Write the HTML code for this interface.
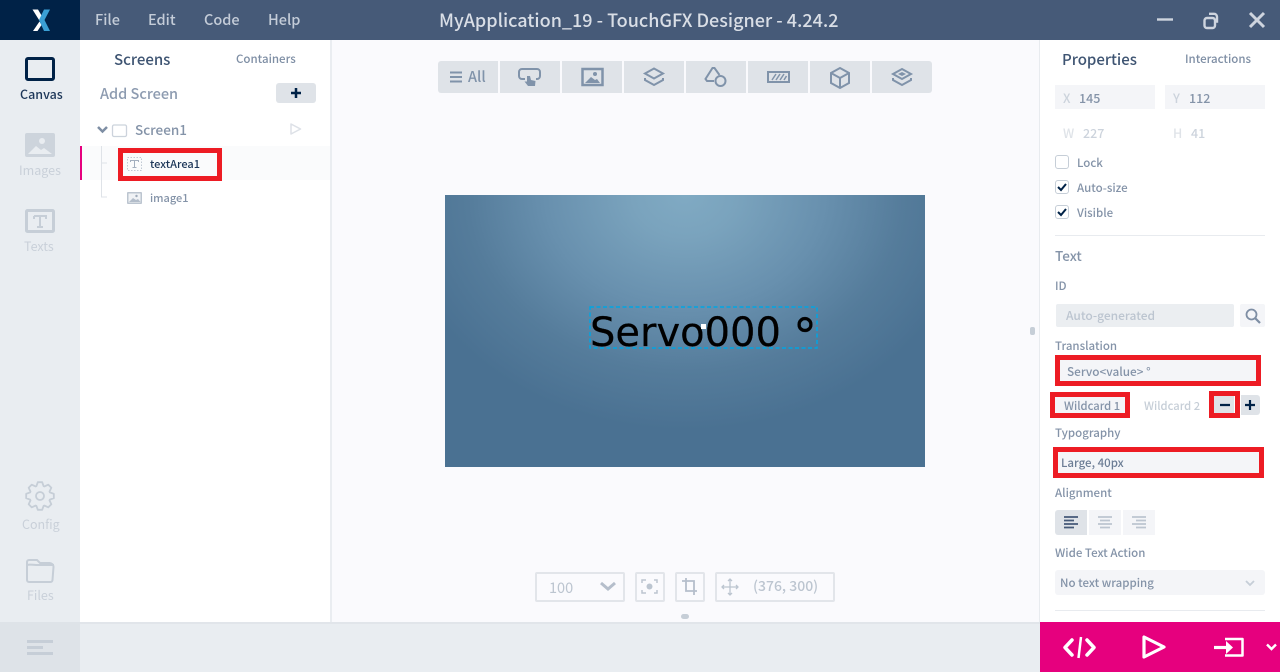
<!DOCTYPE html>
<html><head><meta charset="utf-8"><style>
html,body{margin:0;padding:0;width:1280px;height:672px;overflow:hidden;background:#fff}
body{position:relative;font-family:"Noto Sans CJK JP","Liberation Sans",sans-serif;color:#8493a8}
.a{position:absolute}
.t{position:absolute;white-space:nowrap;line-height:1;font-size:12px}
svg{position:absolute;overflow:visible}
.r{position:absolute;box-sizing:border-box;border:4px solid #ed1c24}
.tb{position:absolute;top:61px;height:32px;width:60px;background:#dfe3e8}
</style></head><body>
<!-- title bar -->
<div class="a" style="left:0;top:0;width:1280px;height:40px;background:#465a78"></div>
<div class="a" style="left:0;top:0;width:80px;height:40px;background:#002247"></div>
<svg style="left:0;top:0" width="80" height="40"><path d="M32.500 9.500h5.500l5 8.500-3 3.500z" fill="#fff"/><path d="M33 31l6.500-9.500 2 3.500-4 6z" fill="#fff"/><path d="M44 9.500h6l-5.500 10.500 5.500 11h-6l-5-11z" fill="#3a9fd4"/></svg>
<div class="t" style="left:95px;top:13px;font-size:14.500px;color:#c4ccd8;font-weight:500">File</div>
<div class="t" style="left:148px;top:13px;font-size:14.500px;color:#c4ccd8;font-weight:500">Edit</div>
<div class="t" style="left:204px;top:13px;font-size:14.500px;color:#c4ccd8;font-weight:500">Code</div>
<div class="t" style="left:268px;top:13px;font-size:14.500px;color:#c4ccd8;font-weight:500">Help</div>
<div class="t" style="left:439px;top:11px;font-size:18px;color:#d9dee6;font-weight:500">MyApplication_19 - TouchGFX Designer - 4.24.2</div>
<svg style="left:1150px;top:8px" width="120" height="26" fill="none" stroke="#ced4de" stroke-width="2.400"><path d="M7 11.500h16"/><rect x="54.500" y="10" width="10.500" height="10" rx="2.500"/><path d="M59 5.800h5a3 3 0 0 1 3 3v6"/><path d="M100 5l14 14M114 5l-14 14" stroke-width="3"/></svg>

<!-- left sidebar -->
<div class="a" style="left:0;top:40px;width:80px;height:582px;background:#e9edf1"></div>
<div class="a" style="left:25px;top:57px;width:30px;height:24px;box-sizing:border-box;border:3px solid #002247;border-radius:3px"></div>
<div class="t" style="left:20px;top:88px;font-size:12.500px;color:#1c3658;font-weight:500">Canvas</div>
<svg style="left:25px;top:133px" width="30" height="24"><rect width="30" height="24" rx="2" fill="#cdd4dc"/><path d="M3 21l8-8 5 4 3-2 8 6z" fill="#e9edf1"/><circle cx="17" cy="8" r="3" fill="#e9edf1"/></svg>
<div class="t" style="left:19px;top:164px;font-size:12.500px;color:#c9d0d9">Images</div>
<svg style="left:25px;top:209px" width="30" height="24"><rect x="1.500" y="1.500" width="27" height="21" rx="1" fill="none" stroke="#c6ced7" stroke-width="3"/><path d="M9 7h12v3M15 7v11M12 18h6M9 7v3" fill="none" stroke="#c6ced7" stroke-width="2"/></svg>
<div class="t" style="left:24px;top:240px;font-size:12.500px;color:#c9d0d9">Texts</div>
<svg style="left:25px;top:481px" width="30" height="30" fill="none" stroke="#c6ced7" stroke-width="1.800"><circle cx="15" cy="15" r="4"/><polygon transform="translate(15 15)" stroke-linejoin="round" points="9.870,-3.590 13.830,-2.190 13.830,2.190 9.870,3.590 9.520,4.440 11.330,8.230 8.230,11.330 4.440,9.520 3.590,9.870 2.190,13.830 -2.190,13.830 -3.590,9.870 -4.440,9.520 -8.230,11.330 -11.330,8.230 -9.520,4.440 -9.870,3.590 -13.830,2.190 -13.830,-2.190 -9.870,-3.590 -9.520,-4.440 -11.330,-8.230 -8.230,-11.330 -4.440,-9.520 -3.590,-9.870 -2.190,-13.830 2.190,-13.830 3.590,-9.870 4.440,-9.520 8.230,-11.330 11.330,-8.230 9.520,-4.440"/></svg>
<div class="t" style="left:22px;top:518px;font-size:12.500px;color:#c9d0d9">Config</div>
<svg style="left:25px;top:558px" width="30" height="26" fill="none" stroke="#c6ced7" stroke-width="2"><path d="M2 22V4a2 2 0 0 1 2-2h8l3 3h9a4 4 0 0 1 4.500 4l-1 13a2 2 0 0 1-2 2H4a2 2 0 0 1-2-2z"/><path d="M2 7c3-1 6 0 9 0h18"/></svg>
<div class="t" style="left:27px;top:589px;font-size:12.500px;color:#c9d0d9">Files</div>

<!-- bottom bar -->
<div class="a" style="left:0;top:622px;width:1280px;height:50px;background:#e9edf1;border-top:2px solid #e1e5ea;box-sizing:border-box"></div>
<div class="a" style="left:0;top:622px;width:80px;height:50px;background:#dee3e8"></div>
<div class="a" style="left:27px;top:640px;width:26px;height:3px;background:#c6ced7"></div>
<div class="a" style="left:27px;top:646px;width:16px;height:3px;background:#c6ced7"></div>
<div class="a" style="left:27px;top:652px;width:26px;height:3px;background:#c6ced7"></div>
<div class="a" style="left:1040px;top:622px;width:240px;height:50px;background:#e6007e"></div>
<svg style="left:1040px;top:622px" width="240" height="50" fill="none" stroke="#fff" stroke-width="3"><path d="M32 18l-7 7.500 7 7.500M47 18l7 7.500-7 7.500" stroke-linejoin="round" stroke-linecap="round" stroke-width="3.500"/><path d="M41 15l-2.500 21" stroke-width="2.500"/><path d="M104 15v20l20-10z" stroke-linejoin="round" stroke-width="3.200"/><path d="M185 17h17.500v16.500h-17.500" stroke-linejoin="round" stroke-width="2.500"/><path d="M174 25.500h14" stroke-width="3.200"/><path d="M186 19l7 6.500-7 6.500z" fill="#fff" stroke="none"/><path d="M227 22.500l4.500 4.500 4.500-4.500" stroke-width="2.400"/></svg>

<!-- screens panel -->
<div class="a" style="left:330px;top:40px;width:2px;height:582px;background:#eaedf1"></div>
<div class="t" style="left:114px;top:52px;font-size:15px;color:#3e5472;font-weight:500">Screens</div>
<div class="t" style="left:236px;top:54px;font-size:11.500px;color:#7e8ea4;font-weight:500">Containers</div>
<div class="t" style="left:100px;top:87px;font-size:14.500px;color:#8d9bb0;font-weight:500">Add Screen</div>
<div class="a" style="left:276px;top:83px;width:40px;height:20px;background:#dfe3e8;border-radius:3px"></div>
<svg style="left:276px;top:83px" width="40" height="20"><path d="M15 10h10M20 5v10" stroke="#002247" stroke-width="2.500"/></svg>
<svg style="left:96px;top:122px" width="30" height="16" fill="none"><path d="M2 5l4.500 4.500L11 5" stroke="#7e8ea4" stroke-width="2.500"/><rect x="16.500" y="3" width="14" height="11.500" rx="1.500" stroke="#ccd3dc" stroke-width="1.300"/></svg>
<div class="t" style="left:135px;top:123px;font-size:13.500px;color:#8493a8;font-weight:500">Screen1</div>
<svg style="left:290px;top:123px" width="12" height="12"><path d="M1 1v10l9.500-5z" fill="none" stroke="#dde1e7" stroke-width="1.500" stroke-linejoin="round"/></svg>
<div class="a" style="left:82px;top:146px;width:248px;height:34px;background:#fafbfc"></div>
<div class="a" style="left:80px;top:146px;width:2px;height:34px;background:#e6007e"></div>
<svg style="left:100px;top:146px" width="10" height="52" fill="none" stroke="#dfe3e8"><path d="M1.500 0v51H7M1.500 17H7"/></svg>
<div class="r" style="left:118px;top:148px;width:104px;height:33px;border-width:5px"></div>
<svg style="left:127px;top:157px" width="15" height="14"><rect x=".5" y=".5" width="14" height="13" fill="none" stroke="#c0c8d3" stroke-dasharray="1.500 1.500"/><path d="M3.500 5V3.500h8V5M7.500 3.500v7M5.500 10.500h4" stroke="#a3afbf" fill="none"/></svg>
<div class="t" style="left:150px;top:159px;font-size:11px;color:#1c3658;font-weight:500">textArea1</div>
<svg style="left:127px;top:192px" width="15" height="12"><rect width="15" height="12" rx="1" fill="#bcc5d0"/><rect x="1.500" y="1.500" width="12" height="9" fill="#f0f2f5"/><path d="M2 10l4-4 3 2 2-1 2.500 3z" fill="#b3bdca"/><circle cx="9.500" cy="4" r="1.200" fill="#9eaab9"/></svg>
<div class="t" style="left:150px;top:193px;font-size:11px;color:#8493a8;font-weight:500">image1</div>

<!-- center -->
<div class="a" style="left:332px;top:40px;width:707px;height:582px;background:#fafafd"></div>
<div class="tb" style="left:438px;width:60px;border-radius:3px 0 0 3px"></div>
<div class="tb" style="left:500px"></div><div class="tb" style="left:562px"></div><div class="tb" style="left:624px"></div><div class="tb" style="left:686px"></div><div class="tb" style="left:748px"></div><div class="tb" style="left:810px"></div><div class="tb" style="left:872px;border-radius:0 3px 3px 0"></div>
<svg style="left:450px;top:71px" width="12" height="12"><path d="M0 1.500h12M0 6h12M0 10.500h12" stroke="#8093aa" stroke-width="2"/></svg>
<div class="t" style="left:468px;top:70px;font-size:14.500px;color:#8093aa;font-weight:500">All</div>
<svg style="left:430px;top:50px" width="510" height="60" fill="none" stroke="#8093aa" stroke-width="2">
<path d="M95 29h-3a3 3 0 0 1-3-3v-4a3 3 0 0 1 3-3h15a3 3 0 0 1 3 3v4a3 3 0 0 1-3 3h-1"/><path d="M97 26h3l1 4 4.500 1-.5 5h-7l-3.500-4.500h2.500z" fill="#8093aa" stroke="none"/>
<rect x="152.500" y="19" width="20" height="16" stroke-width="2.500"/><path d="M155 33l6-6 4 3 2-1 3 4z" fill="#8093aa" stroke="none"/><circle cx="165" cy="24" r="2" fill="#8093aa" stroke="none"/>
<path d="M224 18.500l9 5-9 5-9-5z"/><path d="M215 28v2l9 5 9-5v-2"/>
<path d="M284 31h-7l-1.500-2 7-11h2l5 7"/><circle cx="290.500" cy="31" r="5"/>
<rect x="338" y="22" width="21" height="10" stroke-width="2"/><path d="M342 30l4-6M346 30l4-6M350 30l4-6M354 30l2.500-4" stroke-width="1.500"/>
<path d="M410 18l9 5v10l-9 5-9-5V23zM401 23l9 5 9-5M410 28v10"/>
<path d="M472 19l9 5-9 5-9-5z"/><path d="M463 28v2l9 5 9-5v-2"/><path d="M472 22l4 2-4 2-4-2z" fill="#8093aa" stroke="none"/></svg>

<!-- canvas -->
<div class="a" style="left:445px;top:195px;width:480px;height:272px;background:radial-gradient(ellipse 290px 235px at 240px 0px,#80aac3 0%,#7aa3bd 18%,#6890ae 48%,#557c9b 75%,#4a7192 100%)"></div>
<div class="t" style="left:590px;top:309.500px;font-family:'DejaVu Sans',sans-serif;font-size:40px;line-height:47px;color:#000;height:41px;-webkit-text-stroke:.25px #000">Servo000 <span style="display:inline-block;transform:translate(-1px,0) scale(1.200);transform-origin:left top">°</span></div>
<svg style="left:589px;top:306px" width="229" height="43" fill="none"><rect x="1" y="1" width="227" height="41" stroke="#00a5e3" stroke-width="1.500" stroke-dasharray="4 2.500"/><rect x="112" y="18" width="5" height="5" fill="#fff"/></svg>
<div class="a" style="left:535px;top:572px;width:90px;height:30px;box-sizing:border-box;border:2px solid #e2e5ea;border-radius:2px"></div>
<div class="t" style="left:549px;top:581px;font-size:14.500px;color:#bcc5d0">100</div>
<svg style="left:600px;top:582px" width="16" height="10"><path d="M1 1l7 6 7-6" fill="none" stroke="#b5becb" stroke-width="3"/></svg>
<div class="a" style="left:635px;top:572px;width:30px;height:30px;box-sizing:border-box;border:2px solid #e2e5ea;border-radius:2px"></div>
<svg style="left:642px;top:579px" width="16" height="16" fill="none" stroke="#bcc5d0" stroke-width="1.500"><path d="M0 4V1h4M12 1h3v3M15 11v3h-3M4 14H0v-3"/><circle cx="7.500" cy="7.500" r="3" fill="#bcc5d0" stroke="none"/></svg>
<div class="a" style="left:675px;top:572px;width:30px;height:30px;box-sizing:border-box;border:2px solid #e2e5ea;border-radius:2px"></div>
<svg style="left:682px;top:578px" width="16" height="18" fill="none" stroke="#b5becb" stroke-width="1.800"><path d="M4 0v13h11M0 3h12v14"/></svg>
<div class="a" style="left:715px;top:572px;width:120px;height:30px;box-sizing:border-box;border:2px solid #e2e5ea;border-radius:2px"></div>
<svg style="left:722px;top:579px" width="16" height="16" fill="none" stroke="#bcc5d0" stroke-width="1.300"><path d="M8 0v16M0 8h16M6 2l2-2 2 2M6 14l2 2 2-2M2 6L0 8l2 2M14 6l2 2-2 2"/></svg>
<div class="t" style="left:753px;top:579px;font-size:14px;color:#bcc5d0;font-weight:500">(376, 300)</div>
<div class="a" style="left:681px;top:614px;width:8px;height:5px;border-radius:3px;background:#c6ced7"></div>
<div class="a" style="left:1030px;top:327px;width:5px;height:8px;border-radius:2px;background:#c6ced7"></div>

<!-- properties -->
<div class="a" style="left:1039px;top:40px;width:1px;height:582px;background:#e8ebef"></div>
<div class="t" style="left:1062px;top:52px;font-size:15px;color:#3e5472;font-weight:500">Properties</div>
<div class="t" style="left:1185px;top:54px;font-size:11.500px;color:#7e8ea4;font-weight:500">Interactions</div>
<div class="a" style="left:1055px;top:85px;width:100px;height:24px;background:#f4f5f8"></div>
<div class="a" style="left:1165px;top:85px;width:100px;height:24px;background:#f4f5f8"></div>
<div class="t" style="left:1063px;top:92px;font-size:12.500px;color:#ccd3dc;font-weight:500">X</div>
<div class="t" style="left:1079px;top:92px;font-size:12.500px;color:#8493a8;font-weight:500">145</div>
<div class="t" style="left:1173px;top:92px;font-size:12.500px;color:#ccd3dc;font-weight:500">Y</div>
<div class="t" style="left:1189px;top:92px;font-size:12.500px;color:#8493a8;font-weight:500">112</div>
<div class="t" style="left:1063px;top:127px;font-size:12.500px;color:#dfe3e8;font-weight:500">W</div>
<div class="t" style="left:1083px;top:127px;font-size:12.500px;color:#ccd3dc;font-weight:500">227</div>
<div class="t" style="left:1173px;top:127px;font-size:12.500px;color:#dfe3e8;font-weight:500">H</div>
<div class="t" style="left:1191px;top:127px;font-size:12.500px;color:#ccd3dc;font-weight:500">41</div>
<svg style="left:1055px;top:155px" width="14" height="66" fill="none"><rect x=".5" y=".5" width="13" height="13" rx="2.500" stroke="#c6ced7"/><rect x=".5" y="25.500" width="13" height="13" rx="2.500" stroke="#c6ced7"/><rect x=".5" y="50.500" width="13" height="13" rx="2.500" stroke="#c6ced7"/><path d="M3 32l3 3 5-6M3 57l3 3 5-6" stroke="#002247" stroke-width="2"/></svg>
<div class="t" style="left:1077px;top:158px;font-size:11.500px;color:#8493a8;font-weight:500">Lock</div>
<div class="t" style="left:1077px;top:183px;font-size:11.500px;color:#8493a8;font-weight:500">Auto-size</div>
<div class="t" style="left:1077px;top:208px;font-size:11.500px;color:#8493a8;font-weight:500">Visible</div>
<div class="a" style="left:1055px;top:235px;width:210px;height:1px;background:#e8ebef"></div>
<div class="t" style="left:1055px;top:249px;font-size:13.500px;color:#8493a8;font-weight:500">Text</div>
<div class="t" style="left:1055px;top:281px;font-size:11.500px;color:#8493a8;font-weight:500">ID</div>
<div class="a" style="left:1056px;top:304px;width:178px;height:23px;background:#ebeef1;border-radius:2px"></div>
<div class="t" style="left:1066px;top:310px;font-size:12px;color:#bcc5d0;font-weight:500">Auto-generated</div>
<div class="a" style="left:1240px;top:304px;width:25px;height:23px;background:#f4f5f8;border-radius:2px"></div>
<svg style="left:1245px;top:308px" width="16" height="16" fill="none" stroke="#7e8ea4" stroke-width="1.800"><circle cx="6.500" cy="6.500" r="5"/><path d="M10 10l5 5" stroke-width="2.200"/></svg>
<div class="t" style="left:1055px;top:341px;font-size:11.500px;color:#8493a8;font-weight:500">Translation</div>
<div class="a" style="left:1055px;top:355px;width:206px;height:31px;background:#f4f5f8"></div>
<div class="r" style="left:1055px;top:355px;width:206px;height:31px;border-width:5px"></div>
<div class="t" style="left:1067px;top:366px;font-size:11.800px;color:#8493a8;font-weight:500">Servo&lt;value&gt; °</div>
<div class="a" style="left:1050px;top:392px;width:80px;height:26px;background:#f4f5f8"></div>
<div class="r" style="left:1050px;top:392px;width:80px;height:26px;border-width:5px"></div>
<div class="t" style="left:1064px;top:401px;font-size:11.200px;color:#8493a8;font-weight:500">Wildcard 1</div>
<div class="t" style="left:1144px;top:401px;font-size:11.200px;color:#c6ced7;font-weight:500">Wildcard 2</div>
<div class="a" style="left:1214px;top:396px;width:20px;height:20px;background:#dfe3e8"></div>
<div class="r" style="left:1209px;top:391px;width:31px;height:27px;border-width:5px"></div>
<div class="a" style="left:1241px;top:395px;width:19px;height:20px;background:#dfe3e8;border-radius:0 3px 3px 0"></div>
<svg style="left:1214px;top:396px" width="46" height="20" stroke="#002247" stroke-width="2.200"><path d="M6 9h10M31 9h10M36 4v10"/></svg>
<div class="t" style="left:1055px;top:428px;font-size:11.500px;color:#8493a8;font-weight:500">Typography</div>
<div class="a" style="left:1053px;top:447px;width:211px;height:31px;background:#f4f5f8"></div>
<div class="r" style="left:1053px;top:447px;width:211px;height:31px;border-width:5px"></div>
<div class="t" style="left:1061px;top:458px;font-size:11.500px;color:#6c7d95;font-weight:500">Large, 40px</div>
<div class="t" style="left:1055px;top:488px;font-size:11.500px;color:#8493a8;font-weight:500">Alignment</div>
<div class="a" style="left:1055px;top:510px;width:32px;height:25px;background:#dfe3e8;border-radius:3px 0 0 3px"></div>
<div class="a" style="left:1089px;top:510px;width:32px;height:25px;background:#f4f5f8"></div>
<div class="a" style="left:1123px;top:510px;width:32px;height:25px;background:#f4f5f8"></div>
<svg style="left:1064px;top:516px" width="84" height="13" stroke-width="1.800"><path d="M0 1h14M0 4.500h10M0 8h14M0 11.500h10" stroke="#465a78"/><path d="M34 1h14M36 4.500h10M34 8h14M36 11.500h10M68 1h14M72 4.500h10M68 8h14M72 11.500h10" stroke="#bcc5d0"/></svg>
<div class="t" style="left:1055px;top:548px;font-size:11.500px;color:#8493a8;font-weight:500">Wide Text Action</div>
<div class="a" style="left:1055px;top:570px;width:210px;height:25px;background:#f4f5f8;border-radius:3px"></div>
<div class="t" style="left:1060px;top:578px;font-size:11.500px;color:#8493a8;font-weight:500">No text wrapping</div>
<svg style="left:1245px;top:580px" width="10" height="6"><path d="M1 1l4 4 4-4" fill="none" stroke="#c6ced7" stroke-width="1.800"/></svg>
<div class="a" style="left:1055px;top:610px;width:210px;height:1px;background:#e8ebef"></div>
</body></html>
